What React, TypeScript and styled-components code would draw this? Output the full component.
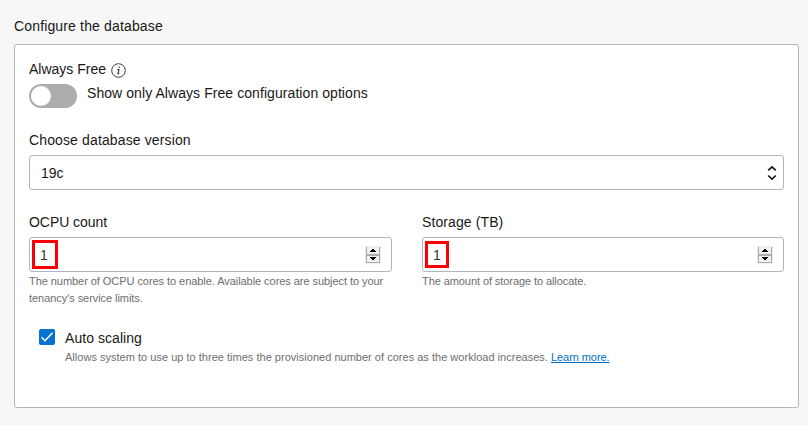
import React from "react";
import styled, { createGlobalStyle } from "styled-components";

const Global = createGlobalStyle`
  * { box-sizing: border-box; }
  body { margin: 0; background: #f7f7f7; font-family: "Liberation Sans", Arial, sans-serif; font-size: 14px; color: #1a1816; overflow: hidden; }
  svg { display: block; flex: none; }
`;
const Page = styled.main`height: 425px; padding: 17px 9px 0 14px;`;
const Title = styled.h2`margin: 0 0 9px; font-size: 14px; line-height: 18px; font-weight: 400; letter-spacing: 0.15px;`;
const Panel = styled.section`height: 364px; background: #fff; border: 1px solid #b0b5c0; border-radius: 3px; padding: 15px 14px 0;`;
const Label = styled.div<{ $track?: number }>`
  display: flex; align-items: center; gap: 5px; height: 18px; line-height: 18px;
  font-size: 14px; letter-spacing: ${(p) => p.$track ?? 0}px; white-space: nowrap;
  & > svg { margin-top: 2px; }
`;
const ToggleRow = styled.div`display: flex; gap: 10px; margin-top: 6px; height: 24px;`;
const Toggle = styled.div`width: 48px; height: 24px; border-radius: 12px; background: #adadad; padding: 2px;`;
const Knob = styled.div`width: 20px; height: 20px; border-radius: 50%; background: #fff;`;
const Version = styled.div`margin-top: 23px;`;
const Box = styled.div`
  display: flex; align-items: center; justify-content: space-between; height: 35px; margin-top: 6px;
  padding: 0 6px 0 11px; border: 1px solid #b0b5c0; border-radius: 3px; font-size: 14px;
`;
const NumberBox = styled(Box)`padding: 0 10px 0 2px;`;
const Fields = styled.div`display: grid; grid-template-columns: 363px 362px; gap: 30px; height: 93px; margin-top: 23px;`;
const Mark = styled.div<{ $compact?: boolean }>`
  display: flex; align-items: center;
  width: ${(p) => (p.$compact ? 24 : 26)}px; height: ${(p) => (p.$compact ? 27 : 29)}px;
  border: 3px solid #fb0007; padding: 1px 0 0 5px; color: #38332f;
`;
const Hint = styled.div<{ $track?: number }>`
  padding-top: 1px; font-size: 11px; line-height: 17px; letter-spacing: ${(p) => p.$track ?? 0}px; color: #6e6e6e; white-space: nowrap;
`;
const ScaleRow = styled.div`display: flex; gap: 10px; margin: 23px 0 0 10px;`;
const Check = styled.div`width: 16px; height: 16px; border-radius: 2px; background: #0572ce;`;
const ScaleText = styled.div`display: flex; flex-direction: column; gap: 1px;`;
const Link = styled.a`color: #006dc7; letter-spacing: -0.07px; text-decoration: underline; text-underline-offset: 1px;`;

const InfoIcon = () => (
  <svg width="15" height="15" viewBox="0 0 15 15" fill="none" stroke="#3d3d3d">
    <circle cx="7.5" cy="7.5" r="6.8" strokeWidth="1" />
    <path d="M6.2 6.5h1.7L7 10.6h1.4" strokeWidth="1.2" />
    <path d="M7.6 3.6h1.3v1.1H7.6z" fill="#3d3d3d" stroke="none" />
  </svg>
);
const SelectIcon = () => (
  <svg width="10" height="16" viewBox="0 0 10 16" fill="none" stroke="#151515" strokeWidth="1.7">
    <path d="M1.2 5.4 5 1.8l3.8 3.6M1.2 10.5 5 14.1l3.8-3.6" />
  </svg>
);
const Stepper = () => (
  <svg width="16" height="18" viewBox="0 0 16 18" shapeRendering="crispEdges">
    <path fill="#f0f0f0" d="M0 0h16v18H0z" />
    <path fill="#acacac" d="M1 1h1v16H1zM14 1h1v16h-1zM2 8h12v2H2zM2 16h12v1H2z" />
    <path fill="#000" d="M7 3h2v1h1v1h1v1H5V5h1V4h1zM5 11h6v1h-1v1H9v1H7v-1H6v-1H5z" />
  </svg>
);

export default function App() {
  return (
    <>
      <Global />
      <Page>
        <Title>Configure the database</Title>
        <Panel>
          <Label>Always Free <InfoIcon /></Label>
          <ToggleRow>
            <Toggle><Knob /></Toggle>
            <Label $track={0.07}>Show only Always Free configuration options</Label>
          </ToggleRow>
          <Version>
            <Label $track={0.13}>Choose database version</Label>
            <Box>19c<SelectIcon /></Box>
          </Version>
          <Fields>
            <div>
              <Label $track={-0.06}>OCPU count</Label>
              <NumberBox><Mark>1</Mark><Stepper /></NumberBox>
              <Hint $track={-0.055}>The number of OCPU cores to enable. Available cores are subject to your<br />tenancy's service limits.</Hint>
            </div>
            <div>
              <Label $track={0.1}>Storage (TB)</Label>
              <NumberBox><Mark $compact>1</Mark><Stepper /></NumberBox>
              <Hint $track={-0.08}>The amount of storage to allocate.</Hint>
            </div>
          </Fields>
          <ScaleRow>
            <Check>
              <svg width="16" height="16" viewBox="0 0 16 16" fill="none" stroke="#fff" strokeWidth="1.5"><path d="M2.5 8.2 6 11.7l7.5-8" /></svg>
            </Check>
            <ScaleText>
              <Label $track={0.05}>Auto scaling</Label>
              <Hint $track={0.018}>Allows system to use up to three times the provisioned number of cores as the workload increases. <Link>Learn more.</Link></Hint>
            </ScaleText>
          </ScaleRow>
        </Panel>
      </Page>
    </>
  );
}
